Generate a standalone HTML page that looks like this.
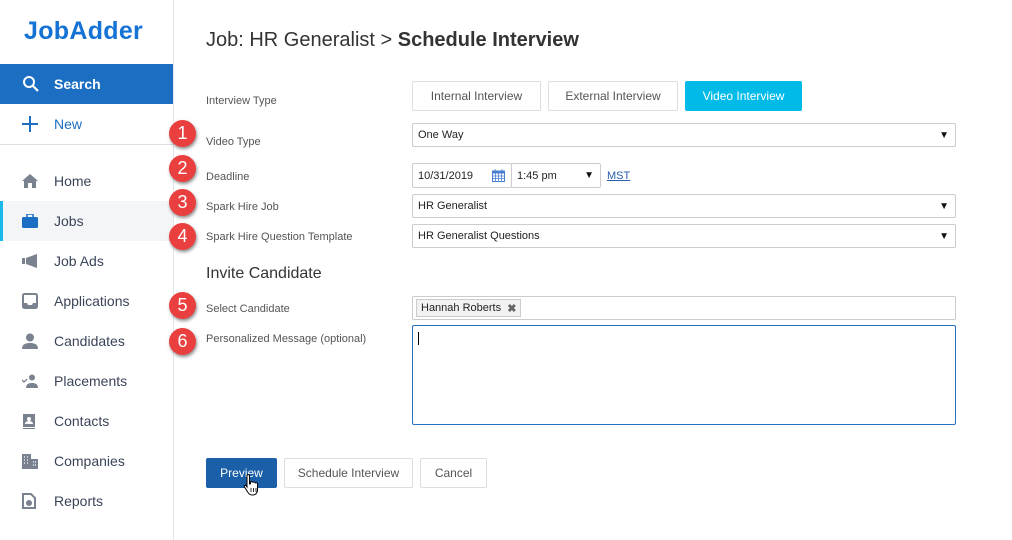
<!DOCTYPE html>
<html><head><meta charset="utf-8"><style>
*{box-sizing:border-box;margin:0;padding:0}
body{width:1012px;height:540px;background:#fff;font-family:"Liberation Sans",sans-serif;position:relative;overflow:hidden;color:#333}
.abs{position:absolute}
#side{position:absolute;left:0;top:0;width:174px;height:540px;border-right:1px solid #e3e5e8;background:#fff}
.logo{position:absolute;left:24px;top:17px;font-size:25px;font-weight:bold;color:#1573d6;letter-spacing:0.3px}
.nav{position:absolute;left:0;width:173px;height:40px;display:flex;align-items:center;font-size:14px;color:#3a4458}
.nav svg{position:absolute;left:22px}
.nav span{position:absolute;left:54px}
.lbl{position:absolute;left:206px;font-size:11px;color:#555}
.box{position:absolute;border:1px solid #ccc;border-radius:2px;font-size:11px;color:#222;padding-left:5px;display:flex;align-items:center;background:#fff}
.arr{position:absolute;right:6px;font-size:10px;color:#111}
.btn{position:absolute;border:1px solid #ddd;border-radius:2px;font-size:12px;color:#555;display:flex;align-items:center;justify-content:center;background:#fff}
.num{position:absolute;left:169px;width:27px;height:27px;border-radius:50%;background:#ea3f3f;color:#fff;font-size:18px;display:flex;align-items:center;justify-content:center;box-shadow:1px 2px 3px rgba(0,0,0,.45)}
</style></head><body>
<div id="side">
<div class="logo">JobAdder</div>
<div class="nav" style="top:64px;background:#1b6ec2;color:#fff;font-weight:bold">
<svg width="18" height="18" viewBox="0 0 18 18"><circle cx="7" cy="7" r="5" fill="none" stroke="#fff" stroke-width="2"/><path d="M11 11l5 5" stroke="#fff" stroke-width="2.2"/></svg><span>Search</span></div>
<div class="nav" style="top:104px;color:#1b6ec2">
<svg width="16" height="16" viewBox="0 0 16 16"><path d="M8 0v16M0 8h16" stroke="#1b6ec2" stroke-width="2"/></svg><span>New</span></div>
<div class="abs" style="left:0;top:144px;width:173px;height:1px;background:#dde0e4"></div>
<div class="nav" style="top:161px"><svg width="16" height="14" viewBox="0 0 16 14"><path d="M8 0L0 7h2v7h4V9h4v5h4V7h2z" fill="#7a8290"/></svg><span>Home</span></div>
<div class="nav" style="top:201px;background:#f4f5f7"><div class="abs" style="left:0;top:0;width:3px;height:40px;background:#19b7ea"></div><svg width="16" height="14" viewBox="0 0 16 14"><rect x="0" y="3" width="16" height="11" rx="1.5" fill="#1b6ec2"/><rect x="5" y="0" width="6" height="4" fill="none" stroke="#1b6ec2" stroke-width="1.5"/></svg><span>Jobs</span></div>
<div class="nav" style="top:241px"><svg width="16" height="14" viewBox="0 0 16 14"><path d="M0 4h3v6H0zM4 4l11-4v14L4 10z" fill="#7a8290"/></svg><span>Job Ads</span></div>
<div class="nav" style="top:281px"><svg width="16" height="16" viewBox="0 0 16 16"><rect x="1" y="1" width="14" height="14" rx="1.5" fill="none" stroke="#7a8290" stroke-width="2"/><path d="M1 10h4l1 2h4l1-2h4v5H1z" fill="#7a8290"/></svg><span>Applications</span></div>
<div class="nav" style="top:321px"><svg width="16" height="16" viewBox="0 0 16 16"><circle cx="8" cy="4.5" r="4" fill="#7a8290"/><path d="M0 16c0-5 4-6 8-6s8 1 8 6z" fill="#7a8290"/></svg><span>Candidates</span></div>
<div class="nav" style="top:361px"><svg width="16" height="14" viewBox="0 0 16 14"><circle cx="10" cy="3.5" r="3" fill="#7a8290"/><path d="M4 14c0-4 3-5 6-5s6 1 6 5z" fill="#7a8290"/><path d="M0 6l2 2 3-3" stroke="#7a8290" fill="none" stroke-width="1.3"/></svg><span>Placements</span></div>
<div class="nav" style="top:401px"><svg width="14" height="16" viewBox="0 0 14 16"><rect x="1" y="1" width="12" height="13" fill="#7a8290"/><circle cx="7" cy="6" r="2" fill="#fff"/><path d="M3 11c0-2 2-3 4-3s4 1 4 3z" fill="#fff"/><path d="M1 15.5h12" stroke="#7a8290"/></svg><span>Contacts</span></div>
<div class="nav" style="top:441px"><svg width="16" height="16" viewBox="0 0 16 16"><path d="M0 1h9v15H0zM9 6h7v10H9z" fill="#7a8290"/><path d="M2 4h1M5 4h1M2 7h1M5 7h1M2 10h1M5 10h1M11 9h1M13 9h1M11 12h1M13 12h1" stroke="#fff" stroke-width="1.3"/></svg><span>Companies</span></div>
<div class="nav" style="top:481px"><svg width="14" height="16" viewBox="0 0 14 16"><path d="M1 1h8l4 4v10H1z" fill="none" stroke="#7a8290" stroke-width="2"/><circle cx="7" cy="10" r="3" fill="#7a8290"/></svg><span>Reports</span></div>
</div>

<div class="abs" style="left:206px;top:29px;font-size:20px;color:#333">Job: HR Generalist &gt; <b>Schedule Interview</b></div>

<div class="lbl" style="top:95px">Interview Type</div>
<div class="btn" style="left:412px;top:81px;width:129px;height:30px">Internal Interview</div>
<div class="btn" style="left:548px;top:81px;width:130px;height:30px">External Interview</div>
<div class="btn" style="left:685px;top:81px;width:117px;height:30px;background:#00bbe8;border-color:#00bbe8;color:#fff">Video Interview</div>

<div class="lbl" style="top:136px">Video Type</div>
<div class="box" style="left:412px;top:123px;width:544px;height:24px">One Way<span class="arr">▼</span></div>

<div class="lbl" style="top:171px">Deadline</div>
<div class="box" style="left:412px;top:163px;width:100px;height:25px">10/31/2019
<svg class="abs" style="left:79px;top:5px" width="13" height="13" viewBox="0 0 13 13"><rect x="0.5" y="2" width="12" height="10.5" fill="#fff" stroke="#4a7fd0"/><rect x="0.5" y="2" width="12" height="2.5" fill="#4a7fd0"/><path d="M3 0v3M10 0v3M0 7h13M0 9.5h13M3.5 4v9M6.5 4v9M9.5 4v9" stroke="#4a7fd0" stroke-width=".8"/></svg></div>
<div class="box" style="left:511px;top:163px;width:90px;height:25px">1:45 pm<span class="arr">▼</span></div>
<div class="abs" style="left:607px;top:170px;font-size:11px;color:#2a5db0;text-decoration:underline">MST</div>

<div class="lbl" style="top:201px">Spark Hire Job</div>
<div class="box" style="left:412px;top:194px;width:544px;height:24px">HR Generalist<span class="arr">▼</span></div>
<div class="lbl" style="top:231px">Spark Hire Question Template</div>
<div class="box" style="left:412px;top:224px;width:544px;height:24px">HR Generalist Questions<span class="arr">▼</span></div>

<div class="abs" style="left:206px;top:265px;font-size:16px;color:#333">Invite Candidate</div>

<div class="lbl" style="top:303px">Select Candidate</div>
<div class="box" style="left:412px;top:296px;width:544px;height:24px;padding-left:3px"><div style="border:1px solid #ccc;background:#f2f2f2;height:18px;padding:0 4px;display:flex;align-items:center;font-size:11px">Hannah Roberts&nbsp;&nbsp;<b style="color:#666">✖</b></div></div>

<div class="lbl" style="top:333px">Personalized Message (optional)</div>
<div class="abs" style="left:412px;top:325px;width:544px;height:100px;border:1px solid #2a6fc0;border-radius:2px"><div class="abs" style="left:5px;top:6px;width:1px;height:13px;background:#000"></div></div>

<div class="btn" style="left:206px;top:458px;width:71px;height:30px;background:#1a5fa8;border-color:#1a5fa8;color:#fff">Preview</div>
<div class="btn" style="left:284px;top:458px;width:129px;height:30px">Schedule Interview</div>
<div class="btn" style="left:420px;top:458px;width:67px;height:30px">Cancel</div>
<svg class="abs" style="left:243px;top:473px" width="20" height="24" viewBox="0 0 20 24"><path d="M5 1.5c1 0 1.5.6 1.5 1.5v8l1-.3V9c.8-.6 2-.6 2.5.3.8-.5 2-.3 2.3.6 1-.5 2.2 0 2.2 1.2V17c0 3-2 5-5 5H9c-2 0-3-1-4-2.5L1.5 14c-.6-1 .5-2.2 1.5-1.4L4 14V3c0-.9.3-1.5 1-1.5z" fill="#fff" stroke="#000" stroke-width="1"/><path d="M8 15v4M10.5 15v4M13 15v4" stroke="#000" stroke-width=".8"/></svg>

<div class="num" style="top:120px">1</div>
<div class="num" style="top:155px">2</div>
<div class="num" style="top:189px">3</div>
<div class="num" style="top:223px">4</div>
<div class="num" style="top:292px">5</div>
<div class="num" style="top:328px">6</div>
</body></html>
